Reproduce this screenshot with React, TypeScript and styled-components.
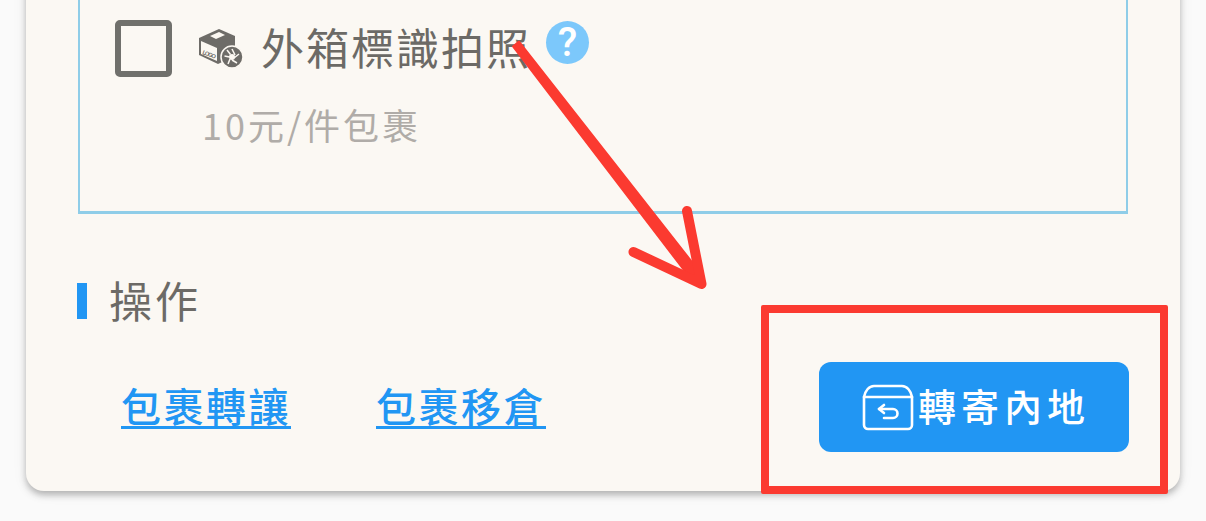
import React from "react";
import styled, { createGlobalStyle } from "styled-components";

const GlobalStyle = createGlobalStyle`
  html, body {
    margin: 0;
    padding: 0;
    background: #fafafa;
    font-family: "Noto Sans CJK TC", "Noto Sans", sans-serif;
  }
`;

const BoxCameraIcon = () => (
  <svg width="46" height="41" viewBox="0 0 46 41">
    <path d="M1 10 L21 1 L37 8 L37 28 L20 36 L1 27 Z" fill="#6e6c68" />
    <path d="M12 8 L21 4 L27 7 L18 11 Z" fill="#fcf8f2" />
    <path d="M3 13 L19 20 V33 L3 26 Z" fill="#fcf8f2" />
    <text x="4" y="26" fontSize="6" fontWeight="700" fill="#6e6c68" fontFamily="Liberation Sans, sans-serif" textLength="14" transform="rotate(20 4 26)">
      LOGO
    </text>
    <circle cx="34" cy="29" r="11" fill="#6e6c68" stroke="#fcf8f2" strokeWidth="1.5" />
    <circle cx="34" cy="29" r="3" fill="#fcf8f2" />
    <g stroke="#fcf8f2" strokeWidth="1.5">
      <path d="M34 21 L37 27" />
      <path d="M41 26 L36 30" />
      <path d="M39 35 L34 32" />
      <path d="M30 36 L32 31" />
      <path d="M26.5 28 L31.5 29" />
      <path d="M29 22 L32.5 26.5" />
    </g>
  </svg>
);

const ParcelReturnIcon = () => (
  <svg width="52" height="47" viewBox="0 0 52 47" fill="none" stroke="#fff" strokeWidth="2.6" strokeLinecap="round" strokeLinejoin="round">
    <path d="M2 13 C3 7 7 2 12 2 H40 C45 2 49 7 50 13 V41 a4 4 0 0 1 -4 4 H6 a4 4 0 0 1 -4 -4 Z" />
    <path d="M2 13 H50" />
    <path d="M22 21 L17 25 L22 29" />
    <path d="M17 25 H31 a4 4 0 0 1 0 9 H22" />
  </svg>
);

export default function App() {
  return (
    <Page>
      <GlobalStyle />
      <Card>
        <OptionBox>
          <OptionRow>
            <Checkbox />
            <OptionIcon>
              <BoxCameraIcon />
            </OptionIcon>
            <OptionLabel>外箱標識拍照</OptionLabel>
            <HelpBadge>?</HelpBadge>
          </OptionRow>
          <OptionPrice>10元/件包裹</OptionPrice>
        </OptionBox>
        <SectionTitle>操作</SectionTitle>
        <ActionRow>
          <ActionLink href="#">包裹轉讓</ActionLink>
          <ActionLink href="#">包裹移倉</ActionLink>
          <ForwardButton>
            <ParcelReturnIcon />
            <ButtonLabel>轉寄內地</ButtonLabel>
          </ForwardButton>
        </ActionRow>
      </Card>
      <HighlightFrame />
      <ArrowMark viewBox="0 0 1206 521">
        <polygon points="519,41.5 513,46.5 693.5,282.5 702.5,275.5" fill="#fb3a30" stroke="#fb3a30" strokeWidth="2" strokeLinejoin="round" />
        <path d="M633.5 252 L701.5 284 L687 211" stroke="#fb3a30" strokeWidth="10" strokeLinecap="round" strokeLinejoin="round" fill="none" />
      </ArrowMark>
    </Page>
  );
}

const Page = styled.div`
  position: relative;
  width: 1206px;
  height: 521px;
  overflow: hidden;
  display: flex;
  flex-direction: column;
  justify-content: flex-end;
  padding: 0 26px 30px;
  box-sizing: border-box;
  background: #fafafa;
`;

const Card = styled.section`
  flex: none;
  background: #fbf8f3;
  border-radius: 0 0 18px 18px;
  box-shadow: 0 4px 6px rgba(90, 90, 90, 0.4), 0 2px 16px rgba(0, 0, 0, 0.06);
  padding: 0 52px 39px;
`;

const OptionBox = styled.div`
  border: solid #8fcde8;
  border-width: 0 2px 3px;
  padding: 60px 35px 65px;
`;

const OptionRow = styled.div`
  display: flex;
  align-items: center;
  height: 58px;
`;

const Checkbox = styled.span`
  flex: none;
  width: 57px;
  height: 57px;
  box-sizing: border-box;
  border: 6px solid #70706c;
  border-radius: 5px;
`;

const OptionIcon = styled.span`
  flex: none;
  display: flex;
  margin: 0 17px 0 26px;
`;

const OptionLabel = styled.span`
  font-size: 43px;
  letter-spacing: 2px;
  line-height: 58px;
  margin-bottom: 4px;
  color: #6c6a66;
  white-space: nowrap;
`;

const HelpBadge = styled.span`
  flex: none;
  width: 43px;
  height: 43px;
  margin: 0 0 11px 15px;
  border-radius: 50%;
  background: #7cc8fb;
  color: #fff;
  font: 500 40px/43px Roboto, sans-serif;
  text-align: center;
`;

const OptionPrice = styled.div`
  margin: 25px 0 0 87px;
  font-size: 36px;
  letter-spacing: 3px;
  line-height: 44px;
  color: #b0aca8;
  white-space: nowrap;
`;

const SectionTitle = styled.h3`
  margin: 69px 0 0 -1px;
  padding: 0 0 4px 22px;
  border-left: 10px solid #2196f3;
  box-sizing: border-box;
  height: 36px;
  display: flex;
  align-items: center;
  font-size: 43px;
  letter-spacing: 3px;
  font-weight: 400;
  color: #6c6a66;
`;

const ActionRow = styled.div`
  display: flex;
  align-items: center;
  margin-top: 43px;
  gap: 85px;
  padding-left: 43px;
`;

const ActionLink = styled.a`
  font-size: 40px;
  letter-spacing: 2.5px;
  font-weight: 500;
  line-height: 60px;
  margin-bottom: 4px;
  color: #2196f3;
  text-decoration: underline;
  text-decoration-thickness: 3px;
  text-decoration-skip-ink: none;
  text-underline-offset: 4px;
  white-space: nowrap;
`;

const ForwardButton = styled.button`
  margin: 0 -1px 0 auto;
  width: 310px;
  height: 90px;
  box-sizing: border-box;
  display: flex;
  align-items: center;
  gap: 4px;
  padding: 0 0 0 43px;
  border: 0;
  border-radius: 12px;
  background: #2196f3;
  color: #fff;
  font-family: inherit;
  font-size: 38px;
  font-weight: 500;
  letter-spacing: 5px;
  white-space: nowrap;
`;

const ButtonLabel = styled.span`
  margin-bottom: 6px;
`;

const HighlightFrame = styled.div`
  position: absolute;
  left: 761px;
  top: 305px;
  width: 407px;
  height: 189px;
  box-sizing: border-box;
  border: 8px solid #fb3a30;
  border-radius: 2px;
`;

const ArrowMark = styled.svg`
  position: absolute;
  inset: 0;
  width: 1206px;
  height: 521px;
  pointer-events: none;
`;
